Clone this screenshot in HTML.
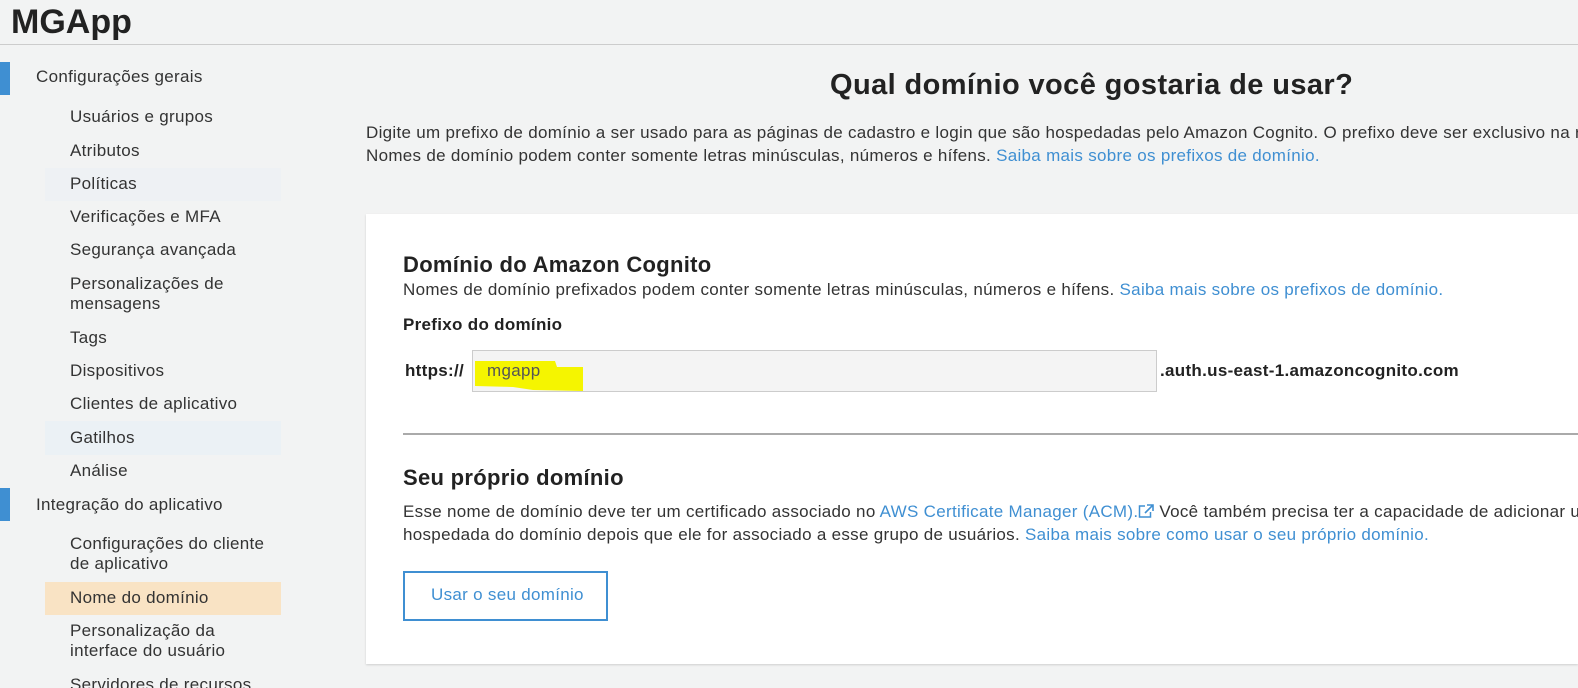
<!DOCTYPE html>
<html><head><meta charset="utf-8"><style>
body{margin:0;width:1578px;height:688px;overflow:hidden;background:#f2f3f3;font-family:"Liberation Sans",Arial,sans-serif;color:#333;position:relative}
#w{position:absolute;left:0;top:0;width:1578px;height:688px;overflow:hidden}
.a{position:absolute;white-space:nowrap;font-size:17px;letter-spacing:0.3px;line-height:20px}
.c{overflow:hidden}
a,.l{color:#3f8fd2;text-decoration:none}
.hl{position:absolute;left:45px;width:236px}
.bar{position:absolute;left:0;width:10px;background:#3f8fd2}
</style></head><body><div id="w">
<div class="a" style="left:11px;top:2px;font-size:34px;letter-spacing:0;line-height:40px;font-weight:bold;color:#222">MGApp</div>
<div style="position:absolute;left:0;top:44px;width:1578px;height:1px;background:#ccc"></div>
<div class="bar" style="top:62px;height:33px"></div>
<div class="bar" style="top:488px;height:33px"></div>
<div class="hl" style="top:168px;height:33px;background:#eef1f4"></div>
<div class="hl" style="top:421px;height:34px;background:#ebf1f5"></div>
<div class="hl" style="top:582px;height:33px;background:#f9e3c4"></div>
<div class="a" style="left:36px;top:67px">Configurações gerais</div>
<div class="a" style="left:70px;top:107px">Usuários e grupos</div>
<div class="a" style="left:70px;top:141px">Atributos</div>
<div class="a" style="left:70px;top:174px">Políticas</div>
<div class="a" style="left:70px;top:207px">Verificações e MFA</div>
<div class="a" style="left:70px;top:240px">Segurança avançada</div>
<div class="a" style="left:70px;top:274px">Personalizações de<br>mensagens</div>
<div class="a" style="left:70px;top:328px">Tags</div>
<div class="a" style="left:70px;top:361px">Dispositivos</div>
<div class="a" style="left:70px;top:394px">Clientes de aplicativo</div>
<div class="a" style="left:70px;top:428px">Gatilhos</div>
<div class="a" style="left:70px;top:461px">Análise</div>
<div class="a" style="left:36px;top:495px">Integração do aplicativo</div>
<div class="a" style="left:70px;top:534px">Configurações do cliente<br>de aplicativo</div>
<div class="a" style="left:70px;top:588px">Nome do domínio</div>
<div class="a" style="left:70px;top:621px">Personalização da<br>interface do usuário</div>
<div class="a" style="left:70px;top:668px;height:20px;overflow:hidden;padding-top:7px;line-height:20px"><div style="margin-top:0">Servidores de recursos</div></div>

<div class="a" style="left:830px;top:68px;font-size:29px;letter-spacing:0.4px;line-height:34px;font-weight:bold;color:#222">Qual domínio você gostaria de usar?</div>
<div class="a c" style="left:366px;top:123px;width:1212px">Digite um prefixo de domínio a ser usado para as páginas de cadastro e login que são hospedadas pelo Amazon Cognito. O prefixo deve ser exclusivo na região</div>
<div class="a" style="left:366px;top:146px">Nomes de domínio podem conter somente letras minúsculas, números e hífens. <span class="l">Saiba mais sobre os prefixos de domínio.</span></div>

<div style="position:absolute;left:366px;top:214px;width:1212px;height:450px;background:#fff;box-shadow:0 1px 2px rgba(0,0,0,.15)"></div>
<div class="a" style="left:403px;top:252px;font-size:22px;line-height:26px;font-weight:bold;color:#222">Domínio do Amazon Cognito</div>
<div class="a" style="left:403px;top:280px">Nomes de domínio prefixados podem conter somente letras minúsculas, números e hífens. <span class="l">Saiba mais sobre os prefixos de domínio.</span></div>
<div class="a" style="left:403px;top:315px;font-weight:bold;color:#222">Prefixo do domínio</div>
<div class="a" style="left:405px;top:361px;font-weight:bold;color:#222">https://</div>
<div style="position:absolute;left:472px;top:350px;width:683px;height:40px;background:#f4f4f4;border:1px solid #ccc"></div>
<svg style="position:absolute;left:473px;top:360px" width="112" height="32"><path d="M2 1 L82 1 L84 7 L110 7 L110 31 L60 30 L40 27 L2 26 Z" fill="#f5f500"/></svg>
<div class="a" style="left:487px;top:361px;color:#555">mgapp</div>
<div class="a" style="left:1160px;top:361px;font-weight:bold;color:#222">.auth.us-east-1.amazoncognito.com</div>
<div style="position:absolute;left:403px;top:433px;width:1175px;height:2px;background:#aaa"></div>
<div class="a" style="left:403px;top:465px;font-size:22px;line-height:26px;font-weight:bold;color:#222">Seu próprio domínio</div>
<div class="a c" style="left:403px;top:502px;width:1175px">Esse nome de domínio deve ter um certificado associado no <span class="l">AWS Certificate Manager (ACM).<svg width="16" height="14" viewBox="0 0 16 14" style="vertical-align:-1px"><path d="M7 2H1.5v11h11V8" fill="none" stroke="#3f8fd2" stroke-width="1.5"/><path d="M9 1h6v6M15 1L7 9" fill="none" stroke="#3f8fd2" stroke-width="1.6"/></svg></span> Você também precisa ter a capacidade de adicionar um registro DNS</div>
<div class="a" style="left:403px;top:525px">hospedada do domínio depois que ele for associado a esse grupo de usuários. <span class="l">Saiba mais sobre como usar o seu próprio domínio.</span></div>
<div style="position:absolute;left:403px;top:571px;width:201px;height:46px;border:2px solid #3f8fd2;box-sizing:content-box"></div>
<div class="a" style="left:431px;top:585px;color:#3f8fd2">Usar o seu domínio</div>
</div></body></html>
